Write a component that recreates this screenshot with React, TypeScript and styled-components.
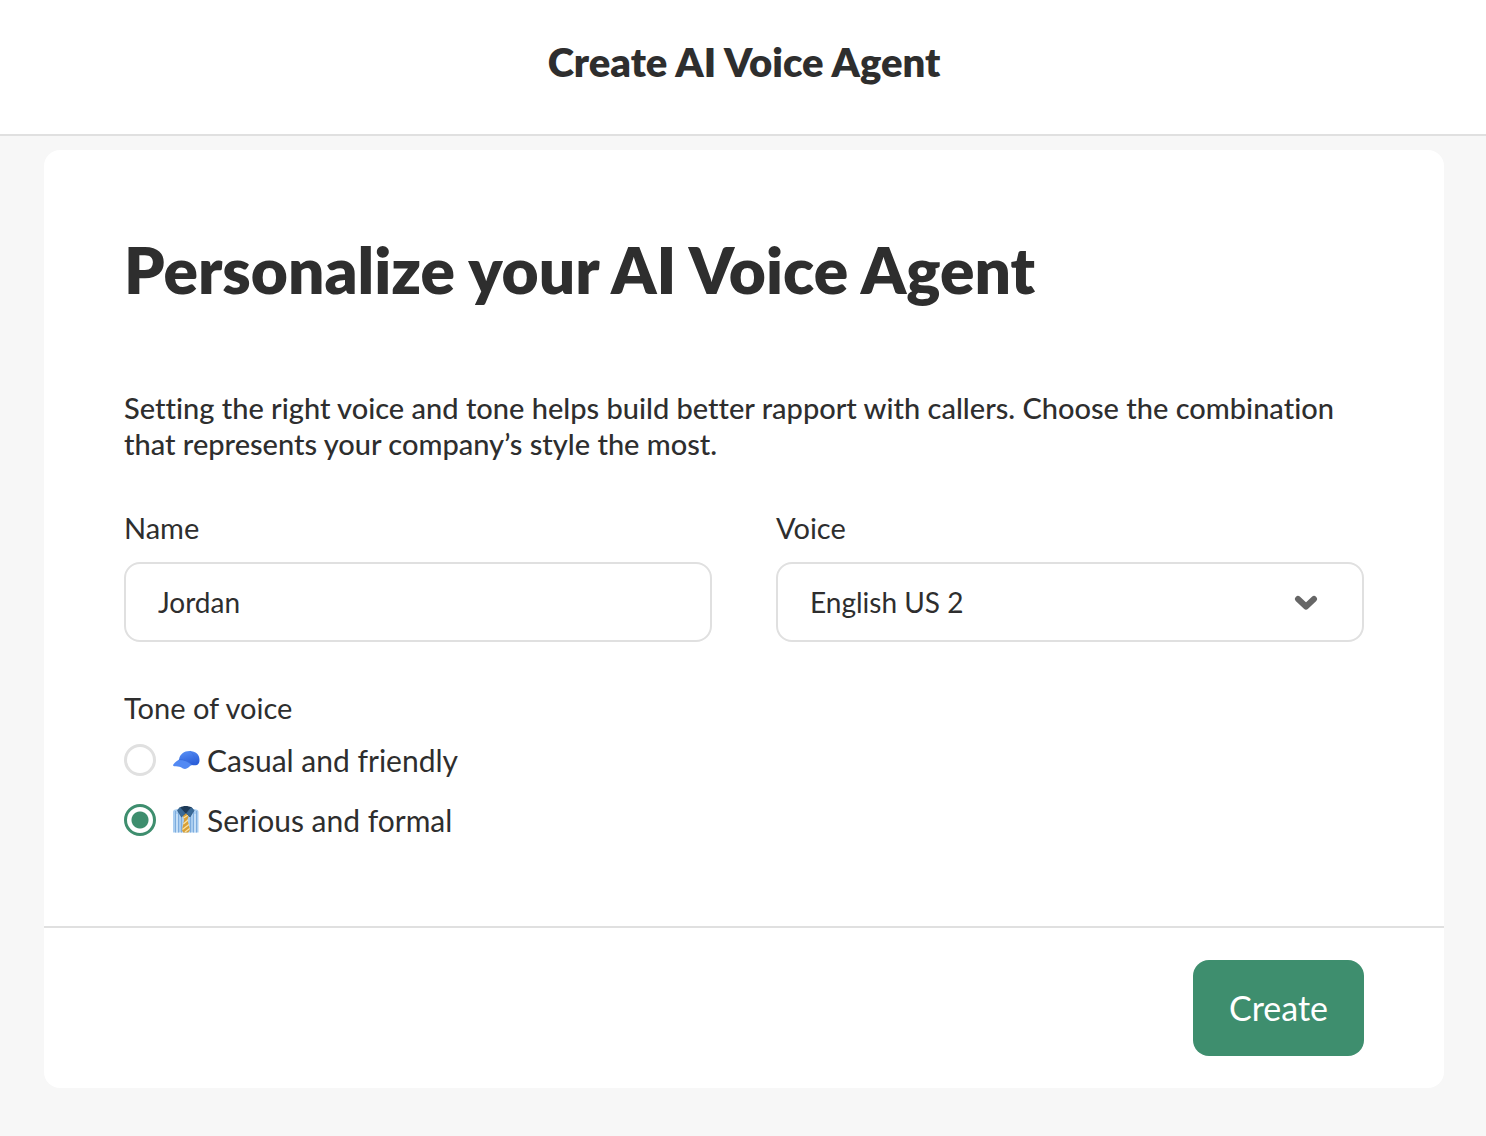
import React, { useState } from "react";
import styled, { createGlobalStyle } from "styled-components";

const ink = "#2e2e2e";
const line = "#e0e0e0";
const green = "#3e8e6e";

const GlobalStyle = createGlobalStyle`
  *, *::before, *::after { box-sizing: border-box; }
  body {
    margin: 0;
    background: #f7f7f7;
    color: ${ink};
    font-family: Lato, "Open Sans", sans-serif;
    font-size: 29px;
    line-height: 36px;
    font-variant-ligatures: none;
  }
`;

const Header = styled.header`
  display: flex;
  justify-content: center;
  padding: 38px 42px 48px 44px;
  background: #fff;
  border-bottom: 2px solid ${line};
`;

const HeaderTitle = styled.p`
  margin: 0;
  font-size: 40px;
  line-height: 48px;
  font-weight: 800;
`;

const Main = styled.main`
  padding: 14px 42px 48px 44px;
`;

const Card = styled.form`
  background: #fff;
  border-radius: 16px;
`;

const CardBody = styled.div`
  padding: 80px 80px 88px;
`;

const Heading = styled.h1`
  margin: 0 0 80px;
  font-size: 64px;
  line-height: 80px;
  font-weight: 800;
`;

const Description = styled.p`
  margin: 0 0 48px;
  font-weight: 500;
`;

const Fields = styled.div`
  display: grid;
  grid-template-columns: 1fr 1fr;
  gap: 64px;
  margin-bottom: 48px;
`;

const Field = styled.div`
  display: flex;
  flex-direction: column;
  gap: 16px;
`;

const controlStyles = `
  width: 100%;
  height: 80px;
  padding: 0 32px;
  border: 2px solid ${line};
  border-radius: 16px;
  background: #fff;
  color: ${ink};
  font: inherit;
  font-size: 28px;
`;

const TextInput = styled.input`
  ${controlStyles}
`;

const SelectWrap = styled.div`
  display: grid;
  align-items: center;
  > * { grid-area: 1 / 1; }
`;

const Select = styled.select`
  ${controlStyles}
  appearance: none;
`;

const Chevron = styled.svg`
  justify-self: end;
  margin-right: 46px;
  pointer-events: none;
`;

const ToneGroup = styled.fieldset`
  display: flex;
  flex-direction: column;
  gap: 24px;
  margin: 0;
  padding: 0;
  border: 0;
`;

const Legend = styled.legend`
  margin-bottom: 16px;
  padding: 0;
`;

const Option = styled.label`
  display: flex;
  align-items: center;
  height: 36px;
  font-size: 30px;
`;

const Radio = styled.input`
  appearance: none;
  width: 32px;
  height: 32px;
  margin: 0 16px 0 0;
  border: 3px solid ${line};
  border-radius: 50%;
  background: #fff;
  &:checked {
    border-color: ${green};
    background: radial-gradient(circle, ${green} 8px, #fff 9px);
  }
`;

const Emoji = styled.svg`
  margin-right: 6px;
`;

const Footer = styled.footer`
  display: flex;
  justify-content: flex-end;
  padding: 32px 80px;
  border-top: 2px solid ${line};
`;

const CreateButton = styled.button`
  padding: 28px 36px;
  border: 0;
  border-radius: 16px;
  background: ${green};
  color: #fff;
  font: inherit;
  font-size: 34px;
  line-height: 40px;
`;

function CapIcon() {
  return (
    <Emoji width="29" height="28" viewBox="0 0 29 28" aria-hidden="true">
      <defs>
        <linearGradient id="crown" x1="0" y1="0" x2="0.4" y2="1">
          <stop offset="0" stopColor="#5b93f7" />
          <stop offset="1" stopColor="#2c5fd9" />
        </linearGradient>
      </defs>
      <path d="M7 13.500C8 8 12 5 17.500 5c6.500 0 10 3.500 10 9 0 2.500-.8 4-2.500 5-3 .8-5 .3-8-1.500C13.500 15.500 11 14.500 7 13.500Z" fill="url(#crown)" />
      <path d="M7 13.500C5 15 2 17 1 19c0 1 1 1.400 3 1.300 2.500 0 4.500.7 6.500 1.900 2 1.200 4 .9 5.500-.4 1.500-1.200 2.500-2.400 4-2.800C17.500 15.500 13 13 7 13.500Z" fill="#5289f3" />
      <path d="M7 13.500c5 0 9.500 1.800 13 5.500" fill="none" stroke="#2f63d6" strokeWidth=".7" />
      <path d="M18 5c3.500 2.500 5.500 7 5 13.500" fill="none" stroke="#3a6de0" strokeWidth=".5" />
    </Emoji>
  );
}

function ShirtIcon() {
  return (
    <Emoji width="29" height="28" viewBox="0 0 29 28" aria-hidden="true">
      <path d="M1 6c0-1.500 1-2 2.500-2.400L8 2.500h11.500l4.500 1.100c1.500.4 2.500.9 2.500 2.400v20.500H1Z" fill="#a9cdf0" />
      <path d="M3.500 5v21.500M6.500 5v21.500M9.500 9v17.500M18.500 9v17.500M21.500 5v21.500M24.500 5v21.500" stroke="#78a8da" strokeWidth=".9" />
      <path d="M5 8v18.500M23 8v18.500" stroke="#e1f0fc" strokeWidth="1" />
      <path d="M8 1.500c3-2 8.500-2 11.500 0l-5.700 6.500Z" fill="#1d3a58" />
      <path d="M11.800 7.500h4l.8 3-1.200 3L18 24l-1.800 2.500h-5L10 24l2.200-10.500-1.200-3Z" fill="#d99f35" />
      <path d="m11.500 12 4.800-3M11.300 18l4.800-4M10.400 23.500l6.600-5M13 26l4.700-3.500" stroke="#f7e2a5" strokeWidth="1.300" />
      <path d="M8 1.300 5.500 4.500l4 6.500 3.800-3.500-4.500-5.200ZM19.500 1.300l2.500 3.200-4 6.500-3.700-3.500 4.500-5.200Z" fill="#396a98" stroke="#244d75" strokeWidth=".6" />
    </Emoji>
  );
}

export default function App() {
  const [tone, setTone] = useState("formal");
  return (
    <>
      <GlobalStyle />
      <Header>
        <HeaderTitle>Create AI Voice Agent</HeaderTitle>
      </Header>
      <Main>
        <Card onSubmit={(e) => e.preventDefault()}>
          <CardBody>
            <Heading>Personalize your AI Voice Agent</Heading>
            <Description>
              Setting the right voice and tone helps build better rapport with callers. Choose the combination that
              represents your company’s style the most.
            </Description>
            <Fields>
              <Field>
                <label htmlFor="name">Name</label>
                <TextInput id="name" type="text" defaultValue="Jordan" />
              </Field>
              <Field>
                <label htmlFor="voice">Voice</label>
                <SelectWrap>
                  <Select id="voice" defaultValue="us2">
                    <option value="us2">English US 2</option>
                  </Select>
                  <Chevron width="24" height="16" viewBox="0 0 24 16" aria-hidden="true">
                    <path d="M4 5 12 12.500 20 5" fill="none" stroke="#666" strokeWidth="6" strokeLinecap="round" strokeLinejoin="round" />
                  </Chevron>
                </SelectWrap>
              </Field>
            </Fields>
            <ToneGroup>
              <Legend>Tone of voice</Legend>
              <Option>
                <Radio type="radio" name="tone" checked={tone === "casual"} onChange={() => setTone("casual")} />
                <CapIcon />
                Casual and friendly
              </Option>
              <Option>
                <Radio type="radio" name="tone" checked={tone === "formal"} onChange={() => setTone("formal")} />
                <ShirtIcon />
                Serious and formal
              </Option>
            </ToneGroup>
          </CardBody>
          <Footer>
            <CreateButton type="submit">Create</CreateButton>
          </Footer>
        </Card>
      </Main>
    </>
  );
}
